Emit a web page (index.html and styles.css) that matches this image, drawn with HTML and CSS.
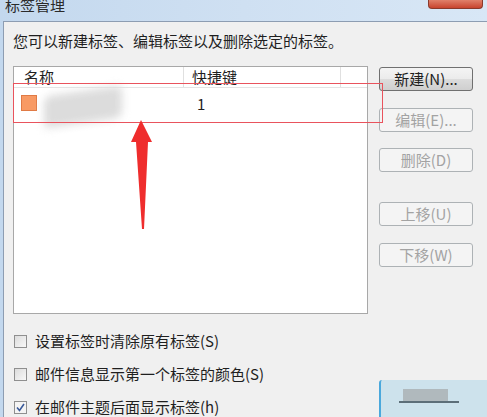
FILE: index.html
```html
<!DOCTYPE html>
<html>
<head>
<meta charset="utf-8">
<link rel="stylesheet" href="styles.css">
</head>
<body>
<div class="frame">
  <div class="titlebar">
    <span class="title">标签管理</span>
    <span class="close"></span>
  </div>
  <div class="dialog">
    <p class="intro">您可以新建标签、编辑标签以及删除选定的标签。</p>
    <div class="main">
      <div class="list">
        <div class="head">
          <div class="col-name">名称</div>
          <div class="col-key">快捷键</div>
          <div class="col-rest"></div>
        </div>
        <div class="row">
          <div class="col-name"><span class="swatch"></span></div>
          <div class="col-key">1</div>
        </div>
        <div class="smudge"></div>
      </div>
      <div class="buttons">
        <button class="btn">新建(N)...</button>
        <button class="btn off b-edit">编辑(E)...</button>
        <button class="btn off b-del">删除(D)</button>
        <button class="btn off b-up">上移(U)</button>
        <button class="btn off b-down">下移(W)</button>
      </div>
    </div>
    <div class="checks">
      <label class="check"><span class="box"></span>设置标签时清除原有标签(S)</label>
      <label class="check"><span class="box"></span>邮件信息显示第一个标签的颜色(S)</label>
      <label class="check"><span class="box on"><svg width="11" height="11" viewBox="0 0 11 11"><path d="M2 5.5 L4.5 8.5 L9 2" fill="none" stroke="#3a5a9a" stroke-width="1.6"/></svg></span>在邮件主题后面显示标签(h)</label>
    </div>
    <div class="okbtn"><span class="ok-a"></span><span class="ok-b"></span></div>
  </div>
  <div class="highlight"></div>
  <svg class="arrow" width="487" height="417" viewBox="0 0 487 417"><polygon points="141,120 152,142 148,142 144,229 142,229 136,142 131,142" fill="#ef2d2d"/></svg>
</div>
</body>
</html>
```
FILE: styles.css
```css
* { box-sizing: border-box; }
html, body { margin: 0; padding: 0; }
body {
  width: 487px;
  height: 417px;
  overflow: hidden;
  font-family: "Noto Sans CJK SC", "Noto Sans", sans-serif;
  color: #1f1f1f;
  background: #c9dcef;
}
.frame {
  position: relative;
  width: 487px;
  height: 417px;
  padding-left: 3px;
  background: linear-gradient(90deg, #c3d8ee 0%, #cfe0f2 50%, #d8e7f6 100%);
}
.titlebar {
  height: 21px;
  display: flex;
  justify-content: space-between;
  align-items: flex-start;
  overflow: hidden;
}
.title {
  font-size: 15px;
  line-height: 15px;
  margin-top: -3px;
  margin-left: 2px;
  color: #2a2a2a;
}
.close {
  width: 55px;
  height: 9px;
  margin-right: 4px;
  background: linear-gradient(180deg, #e0806a, #c8442e);
  border: 1px solid #8a3a2c;
  border-top: none;
  border-radius: 0 0 4px 4px;
}
.dialog {
  position: relative;
  height: 396px;
  background: #f0f0f0;
  border-top: 1px solid #8d9db2;
  border-left: 1px solid #8d9db2;
  padding: 9px 0 0 9px;
}
.intro {
  margin: 0;
  font-size: 15px;
  line-height: 20px;
  height: 35px;
}
.main {
  display: flex;
  align-items: flex-start;
}
.list {
  position: relative;
  width: 355px;
  height: 248px;
  background: #fff;
  border: 1px solid #a8a8a8;
  overflow: hidden;
}
.head {
  display: flex;
  height: 21px;
  font-size: 15px;
  line-height: 20px;
  border-bottom: 1px solid #e4e4e4;
}
.head .col-name { width: 170px; padding-left: 10px; border-right: 1px solid #e0e0e0; }
.head .col-key { width: 157px; padding-left: 8px; border-right: 1px solid #e0e0e0; }
.head .col-rest { flex: 1; }
.row {
  display: flex;
  height: 30px;
  align-items: center;
  font-size: 15px;
}
.row .col-name { width: 171px; padding-left: 7px; display: flex; align-items: center; }
.row .col-key { padding-left: 12px; }
.swatch {
  width: 16px;
  height: 16px;
  background: #f89a64;
  border: 1px solid #e07a45;
}
.smudge {
  position: absolute;
  left: 30px;
  top: 24px;
  width: 78px;
  height: 32px;
  background: #dcdcdc;
  border-radius: 6px;
  filter: blur(4px);
  transform: skewY(-8deg);
}
.buttons {
  display: flex;
  flex-direction: column;
  margin-left: 11px;
  padding-top: 1px;
}
.btn {
  width: 94px;
  height: 24px;
  padding: 0;
  font-family: inherit;
  font-size: 15px;
  line-height: 20px;
  color: #1f1f1f;
  background: linear-gradient(180deg, #f4f4f4 0%, #ebebeb 50%, #dcdcdc 51%, #cfcfcf 100%);
  border: 1px solid #707070;
  border-radius: 3px;
}
.btn.off {
  color: #a3a3a3;
  background: #f4f4f4;
  border-color: #adb2b5;
}
.b-edit { margin-top: 17px; }
.b-del { margin-top: 16px; }
.b-up { margin-top: 30px; }
.b-down { margin-top: 17px; }
.checks {
  display: flex;
  flex-direction: column;
  margin-top: 17px;
  gap: 13px;
}
.check {
  display: flex;
  align-items: center;
  height: 20px;
  font-size: 15px;
  line-height: 20px;
  margin-left: 1px;
}
.box {
  width: 13px;
  height: 13px;
  margin-right: 8px;
  border: 1px solid #8f8f8f;
  background: linear-gradient(135deg, #dcdcdc, #f8f8f8);
  display: flex;
  align-items: center;
  justify-content: center;
}
.box.on { background: #f4f4f4; }
.okbtn {
  position: absolute;
  left: 375px;
  top: 358px;
  width: 110px;
  height: 40px;
  background: #cde2ec;
  border-left: 2px solid #4aa8dc;
  border-radius: 3px 0 0 3px;
}
.ok-a {
  position: absolute;
  left: 22px;
  top: 9px;
  width: 45px;
  height: 14px;
  background: #b0b9bd;
}
.ok-b {
  position: absolute;
  left: 18px;
  top: 21px;
  width: 60px;
  height: 2px;
  background: #5c6e78;
}
.highlight {
  position: absolute;
  left: 13px;
  top: 83px;
  width: 370px;
  height: 40px;
  border: 1.5px solid #e9535d;
}
.arrow {
  position: absolute;
  left: 0;
  top: 0;
  pointer-events: none;
}
```
